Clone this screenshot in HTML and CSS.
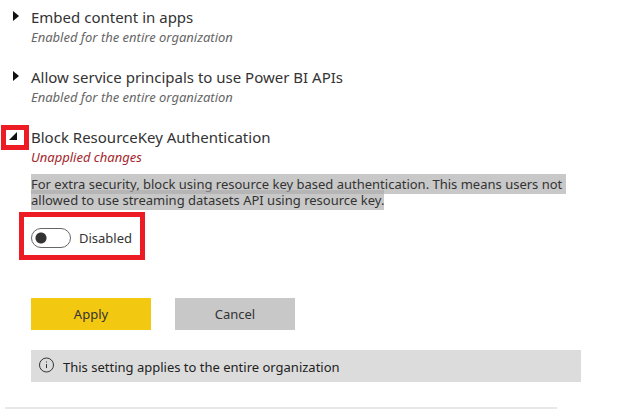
FILE: index.html
```html
<!DOCTYPE html>
<html lang="en">
<head>
<meta charset="utf-8">
<title>Tenant settings</title>
<link rel="stylesheet" href="styles.css">
</head>
<body>
<main class="settings">
  <section class="setting">
    <button class="toggle" type="button" aria-expanded="false" aria-label="Expand Embed content in apps">
      <svg class="arrow" viewBox="0 0 6 12" width="6" height="12"><path d="M0 1v10l6-5z"/></svg>
    </button>
    <div class="content">
      <h2 class="title">Embed content in apps</h2>
      <p class="status">Enabled for the entire organization</p>
    </div>
  </section>
  <section class="setting">
    <button class="toggle" type="button" aria-expanded="false" aria-label="Expand Allow service principals">
      <svg class="arrow" viewBox="0 0 6 12" width="6" height="12"><path d="M0 1v10l6-5z"/></svg>
    </button>
    <div class="content">
      <h2 class="title">Allow service principals to use Power BI APIs</h2>
      <p class="status">Enabled for the entire organization</p>
    </div>
  </section>
  <section class="setting">
    <button class="toggle toggle-marked" type="button" aria-expanded="true" aria-label="Collapse Block ResourceKey Authentication">
      <svg class="arrow-open" viewBox="0 0 8 8" width="8" height="8"><path d="M8 0v8H0z"/></svg>
    </button>
    <div class="content">
      <h2 class="title">Block ResourceKey Authentication</h2>
      <p class="status status-changed">Unapplied changes</p>
      <p class="description"><span class="selected">For extra security, block using resource key based authentication. This means users not&nbsp;<br>allowed to use streaming datasets API using resource key.</span></p>
      <label class="switch">
        <input class="switch-input" type="checkbox" role="switch">
        <span>Disabled</span>
      </label>
      <div class="actions">
        <button class="button button-primary" type="button">Apply</button>
        <button class="button" type="button">Cancel</button>
      </div>
      <div class="notice">
        <svg class="info" viewBox="0 0 16 16" width="16" height="16"><circle cx="7.5" cy="8" r="7"/><path d="M7.5 7v4M7.5 4.5v1"/></svg>
        <span>This setting applies to the entire organization</span>
      </div>
    </div>
  </section>
  <hr class="divider">
</main>
</body>
</html>
```
FILE: styles.css
```css
*,
*::after {
  box-sizing: border-box;
}

body {
  margin: 0;
  background: #fff;
  color: #333;
  font-family: "Segoe UI", "Noto Sans", "Open Sans", sans-serif;
  font-size: 13px;
  line-height: 20px;
}

.settings {
  padding: 7px 46px 0 5px;
}

.setting {
  display: flex;
  align-items: flex-start;
  margin-bottom: 20px;
}

.toggle {
  position: relative;
  display: flex;
  flex: 0 0 26px;
  height: 18px;
  padding: 0 0 0 8px;
  border: 0;
  align-items: center;
  background: none;
}

.toggle-marked {
  padding-left: 4px;
}

.toggle-marked::after {
  content: "";
  position: absolute;
  top: -2px;
  left: -4px;
  width: 28px;
  height: 25px;
  border: 5px solid #ed1c24;
}

.arrow,
.arrow-open {
  fill: #111;
}

.content {
  flex: 1;
  min-width: 0;
}

.title,
.status,
.description {
  margin: 0;
}

.title {
  font-size: 15px;
  font-weight: 400;
}

.status {
  color: #666;
  font-style: italic;
}

.status-changed {
  color: #a4262c;
}

.description {
  margin-top: 9px;
  line-height: 16px;
  white-space: nowrap;
}

.selected {
  padding: 1px 0;
  background: rgba(170, 170, 170, 0.65);
}

.switch {
  position: relative;
  display: flex;
  width: max-content;
  margin-top: 20px;
  align-items: center;
  gap: 8px;
}

.switch::after {
  content: "";
  position: absolute;
  inset: -16px -13px -12px -12px;
  border: 5px solid #ed1c24;
}

.switch-input {
  width: 40px;
  height: 20px;
  margin: 0;
  border: 1px solid #666;
  border-radius: 10px;
  appearance: none;
  background: radial-gradient(circle at 9px 9px, #333 5px, transparent 6px);
}

.switch-input:checked {
  background: radial-gradient(circle at 29px 9px, #333 5px, transparent 6px);
}

.actions {
  display: flex;
  margin-top: 50px;
  gap: 24px;
}

.button {
  width: 120px;
  height: 32px;
  padding: 0;
  border: 0;
  background: #c8c8c8;
  color: #333;
  font: inherit;
}

.button-primary {
  background: #f2c811;
}

.notice {
  display: flex;
  min-height: 32px;
  margin-top: 20px;
  padding: 2px 8px 0;
  align-items: center;
  gap: 8px;
  background: #dcdcdc;
  color: #222;
}

.info {
  margin-top: -4px;
  fill: none;
  stroke: #333;
}

.divider {
  height: 2px;
  margin: 25px 24px 0 0;
  border: 0;
  background: #e8e8e8;
}
```
